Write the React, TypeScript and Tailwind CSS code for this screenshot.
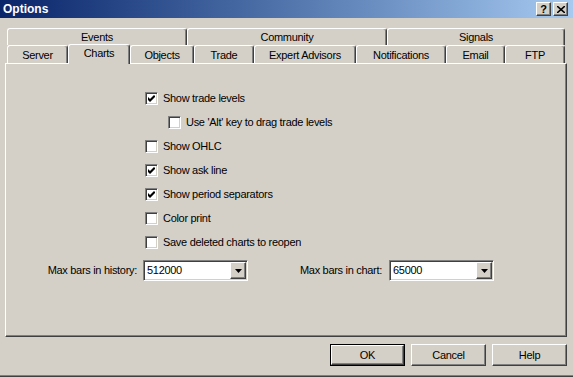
import React from "react";

const rowOne = [
  { label: "Events", w: "w-[180px]" },
  { label: "Community", w: "w-[200px]" },
  { label: "Signals", w: "w-[178px]" },
];

const rowTwo = [
  { label: "Server", w: "w-[61px]" },
  { label: "Charts", w: "w-[62px]", active: true },
  { label: "Objects", w: "w-[64px]" },
  { label: "Trade", w: "w-[60px]" },
  { label: "Expert Advisors", w: "w-[102px]" },
  { label: "Notifications", w: "w-[90px]" },
  { label: "Email", w: "w-[59px]" },
  { label: "FTP", w: "w-[60px]" },
];

const options = [
  { label: "Show trade levels", checked: true },
  { label: "Use 'Alt' key to drag trade levels", checked: false, nested: true },
  { label: "Show OHLC", checked: false },
  { label: "Show ask line", checked: true },
  { label: "Show period separators", checked: true },
  { label: "Color print", checked: false },
  { label: "Save deleted charts to reopen", checked: false },
];

const raised =
  "border border-t-white border-l-white border-r-[#404040] border-b-[#404040] shadow-[inset_-1px_-1px_0_#808080]";
const sunken =
  "border border-t-[#808080] border-l-[#808080] border-r-white border-b-white shadow-[inset_1px_1px_0_#404040,inset_-1px_-1px_0_#d4d0c8]";

function Checkbox({ checked }: { checked: boolean }) {
  return (
    <div className={`w-[13px] h-[13px] bg-white flex items-center justify-center ${sunken}`}>
      {checked && (
        <svg width="7" height="7" viewBox="0 0 7 7">
          <path d="M0 2 L2 4 L6 0 L7 1 L7 2 L2 7 L0 5 Z" fill="#000" />
        </svg>
      )}
    </div>
  );
}

function Combo({ value }: { value: string }) {
  return (
    <div className={`w-[105px] h-[21px] bg-white flex items-center justify-between pl-[3px] pr-[1px] ${sunken}`}>
      <span>{value}</span>
      <div className={`w-[16px] h-[17px] bg-[#d4d0c8] flex items-center justify-center ${raised}`}>
        <svg width="7" height="4" viewBox="0 0 7 4">
          <path d="M0 0 H7 L3.5 4 Z" fill="#000" />
        </svg>
      </div>
    </div>
  );
}

function Tab({ label, w, active }: { label: string; w: string; active?: boolean }) {
  return (
    <div
      className={`${w} flex justify-center rounded-t-[3px] border-l border-t border-r border-l-white border-t-white border-r-[#404040] shadow-[inset_-1px_0_0_#808080] ${
        active ? "h-[20px] -mb-[1px] relative z-10 bg-[#d4d0c8] pt-[3px]" : "h-[18px] pt-[4px]"
      }`}
    >
      {label}
    </div>
  );
}

function Button({ label, isDefault }: { label: string; isDefault?: boolean }) {
  return (
    <div className={`w-[75px] h-[22px] ${isDefault ? "border border-black" : ""}`}>
      <div className={`w-full h-full flex items-center justify-center ${raised}`}>{label}</div>
    </div>
  );
}

export default function App() {
  return (
    <div
      className="w-[573px] h-[377px] bg-[#d4d0c8] text-black text-[11px] tracking-[-0.3px] leading-none flex flex-col border-b border-b-[#404040] shadow-[inset_0_-1px_0_#808080] overflow-hidden"
      style={{ fontFamily: '"Liberation Sans", Arial, sans-serif' }}
    >
      {/* title bar */}
      <div className="h-[18px] bg-gradient-to-r from-[#0a246a] to-[#a6caf0] flex items-center justify-between pl-[3px] pr-[5px]">
        <span className="text-white font-bold text-[12px] tracking-normal">Options</span>
        <div className="flex gap-[2px]">
          <div className={`w-[15px] h-[14px] bg-[#d4d0c8] flex items-center justify-center font-bold text-[11px] ${raised}`}>?</div>
          <div className={`w-[15px] h-[14px] bg-[#d4d0c8] flex items-center justify-center ${raised}`}>
            <svg width="8" height="7" viewBox="0 0 8 7">
              <path d="M0 0 L8 7 M8 0 L0 7" stroke="#000" strokeWidth="1.6" />
            </svg>
          </div>
        </div>
      </div>

      <div className="pl-[5px] pr-[6px] pt-[10px] flex flex-col">
        {/* tabs */}
        <div className="flex h-[17px] ml-[2px]">
          {rowOne.map((t) => (
            <div
              key={t.label}
              className={`${t.w} h-[17px] flex justify-center pt-[3px] rounded-t-[3px] border-l border-t border-r border-l-white border-t-white border-r-[#404040] shadow-[inset_-1px_0_0_#808080]`}
            >
              {t.label}
            </div>
          ))}
        </div>
        <div className="flex items-end h-[18px] ml-[2px]">
          {rowTwo.map((t) => (
            <Tab key={t.label} {...t} />
          ))}
        </div>

        {/* page */}
        <div className="h-[274px] border border-t-white border-l-white border-r-[#404040] border-b-[#404040] shadow-[inset_-1px_-1px_0_#808080] pt-[22px]">
          <div className="flex flex-col">
            {options.map((o) => (
              <div
                key={o.label}
                className={`h-[24px] flex items-center gap-[5px] ${o.nested ? "pl-[162px]" : "pl-[139px]"}`}
              >
                <Checkbox checked={o.checked} />
                <span>{o.label}</span>
              </div>
            ))}
          </div>
          <div className="flex items-center mt-[6px]">
            <div className="w-[131px] text-right">Max bars in history:</div>
            <div className="ml-[6px]">
              <Combo value="512000" />
            </div>
            <div className="w-[134px] text-right">Max bars in chart:</div>
            <div className="ml-[7px]">
              <Combo value="65000" />
            </div>
          </div>
        </div>

        {/* buttons */}
        <div className="flex justify-end gap-[6px] mt-[7px]">
          <Button label="OK" isDefault />
          <Button label="Cancel" />
          <Button label="Help" />
        </div>
      </div>
    </div>
  );
}
